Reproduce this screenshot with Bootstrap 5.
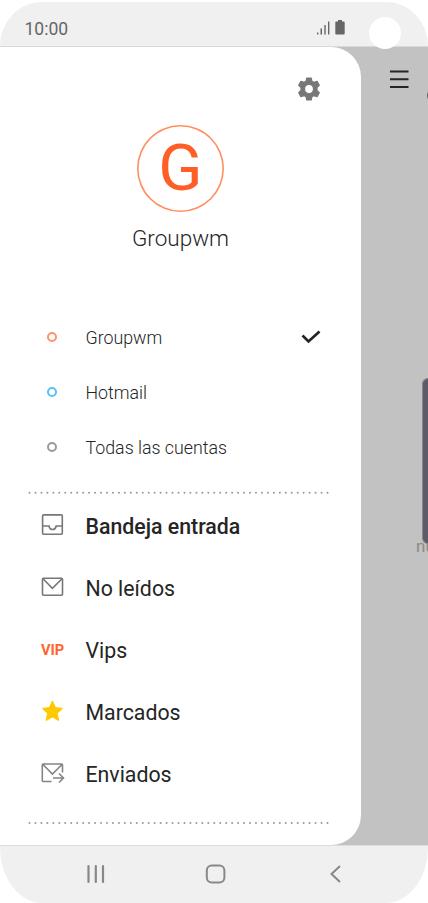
<!DOCTYPE html>
<html lang="es">
<head>
<meta charset="utf-8">
<meta name="viewport" content="width=device-width, initial-scale=1">
<title>Correo</title>
<link href="https://cdn.jsdelivr.net/npm/bootstrap@5.3.0/dist/css/bootstrap.min.css" rel="stylesheet">
<style>
body{background:#fff;font-family:Roboto,sans-serif;color:#252525}
svg{display:block;flex:none}
.phone{width:428px;height:903px;padding-top:2px}
.status{height:45px;background:#f0f0f0;border-bottom:1px solid #d9d9d9;border-radius:42px 42px 0 0/44px 44px 0 0;padding:14px 82.500px 0 24.500px;color:#666;font-size:17.5px}
.signals{margin-top:3px}
.camera{left:368.500px;top:16.500px;width:32px;height:32px;background:#fff;z-index:3}
.stage{height:798px;background:#c2c2c2}
.drawer{width:361px;background:#fff;border-radius:0 30px 30px 0}
.behind{width:67px}
.gear{padding:30px 40.500px 0 0;height:78px}
.avatar{width:87px;height:87px;box-shadow:inset 0 0 0 1.600px #ff8f62;color:#ff5f27;font-size:65px;line-height:1}
.owner{font-size:22.5px;font-weight:300;line-height:28px;margin-top:12px}
.accounts{margin-top:57px}
.account{height:55px;padding:0 40px 0 41px;font-size:17.8px;font-weight:300}
.account-name{padding-top:3px}
.folder{height:62.2px;padding-left:41px;font-size:21.3px}
.folder-name{padding-top:3px}
.current{font-weight:500}
.icon-slot{width:22px;margin-right:22.500px;flex:none}
.ring{width:10px;height:10px;border:2px solid #9a9a9a}
.ring-orange{border-color:#ff9266}
.ring-blue{border-color:#5cc0f2}
.vip{color:#ff6430;font-size:14.6px;font-weight:700;line-height:1;padding-top:2px}
.keys{height:58px;background:#f0f0f0;border-top:1px solid #dedede;border-radius:0 0 42px 42px/0 0 56px 56px;padding:0 86px 1px}
.home-key{margin-left:-5px}
.panel{width:6px;height:166px;margin-top:267px;background:#5c5b69;border:solid #858585;border-width:1px 0 1px 1px;border-radius:7px 0 0 7px}
.peek{font-size:17px;line-height:20px;color:#8a8a8a;width:12px;margin-top:-8px}
</style>
<script src="https://cdn.jsdelivr.net/npm/bootstrap@5.3.0/dist/js/bootstrap.bundle.min.js"></script>
</head>
<body>
<div class="phone position-relative overflow-hidden d-flex flex-column">
  <header class="status d-flex justify-content-between">
    <span>10:00</span>
    <svg class="signals" width="30" height="17" viewBox="0 0 30 17" fill="#666"><path d="M1 13.500h1.400v2H1zM4.500 9.500H6v6H4.500zM8.300 6h1.400v9.500H8.300zM12 2.500h1.400v13H12zM22 1h4v1.400h1.700q1 0 1 1V14.500q0 1-1 1h-7.400q-1 0-1-1V3.400q0-1 1-1h1.700z"/></svg>
  </header>
  <div class="camera position-absolute rounded-circle"></div>
  <main class="stage d-flex">
    <aside class="drawer d-flex flex-column">
      <div class="gear d-flex justify-content-end">
        <svg width="24" height="24" viewBox="0 0 24 24" fill="#777"><path fill-rule="evenodd" stroke="#777" stroke-width="1.200" stroke-linejoin="round" d="M9.800 1h4.400l.7 3.200 2 1.150 3.200-1L22.300 8.300l-2.300 2.300v2.700l2.300 2.300-2.200 4-3.200-1-2 1.150-.7 3.250H9.800l-.7-3.250-2-1.150-3.200 1-2.200-4L4 13.300v-2.700L1.700 8.300l2.200-3.950 3.200 1 2-1.150zM12 7.500a4.500 4.500 0 1 0 0 9 4.500 4.500 0 1 0 0-9z"/></svg>
      </div>
      <div class="d-flex flex-column align-items-center">
        <div class="avatar rounded-circle d-flex align-items-center justify-content-center">G</div>
        <div class="owner">Groupwm</div>
      </div>
      <div class="accounts">
        <div class="account d-flex align-items-center">
          <div class="icon-slot d-flex justify-content-center"><span class="ring ring-orange rounded-circle"></span></div>
          <span class="account-name">Groupwm</span>
          <svg class="ms-auto" width="20" height="14" viewBox="0 0 20 14"><path d="M1.500 5.500l6 6L18.500 1.500" fill="none" stroke="#252525" stroke-width="2.700"/></svg>
        </div>
        <div class="account d-flex align-items-center">
          <div class="icon-slot d-flex justify-content-center"><span class="ring ring-blue rounded-circle"></span></div>
          <span class="account-name">Hotmail</span>
        </div>
        <div class="account d-flex align-items-center">
          <div class="icon-slot d-flex justify-content-center"><span class="ring rounded-circle"></span></div>
          <span class="account-name">Todas las cuentas</span>
        </div>
      </div>
      <svg width="361" height="20" viewBox="0 0 361 20"><path d="M29.500 18.700h299" stroke="#999" stroke-width="2" stroke-linecap="round" stroke-dasharray="0 5.960"/></svg>
      <nav>
        <div class="folder current d-flex align-items-center">
          <div class="icon-slot"><svg width="23" height="22" viewBox="0 0 23 22" fill="none" stroke="#777" stroke-width="1.600"><rect x="1.600" y=".9" width="19.700" height="19.300" rx="1"/><path d="M2 12h6q.6 3.500 3.600 3.500t3.600-3.500h6.300"/></svg></div>
          <span class="folder-name">Bandeja entrada</span>
        </div>
        <div class="folder d-flex align-items-center">
          <div class="icon-slot"><svg width="23" height="20" viewBox="0 0 23 20" fill="none" stroke="#777" stroke-width="1.600"><rect x="1.500" y="1.300" width="20" height="17" rx="1"/><path d="M2 1.800l9.400 9.500L21 1.800"/></svg></div>
          <span class="folder-name">No leídos</span>
        </div>
        <div class="folder d-flex align-items-center">
          <div class="icon-slot vip">VIP</div>
          <span class="folder-name">Vips</span>
        </div>
        <div class="folder d-flex align-items-center">
          <div class="icon-slot"><svg width="23" height="23" viewBox="0 0 23 23" fill="#ffc900" stroke="#ffc900" stroke-linejoin="round"><path d="M11.400 1l3 6.600 7.100.8-5.300 4.900 1.500 7.200-6.300-3.500-6.300 3.500 1.500-7.200-5.300-4.900 7.100-.8z"/></svg></div>
          <span class="folder-name">Marcados</span>
        </div>
        <div class="folder d-flex align-items-center">
          <div class="icon-slot"><svg width="25" height="22" viewBox="0 0 25 22" fill="none" stroke="#858585" stroke-width="1.600"><path d="M10.500 18.500H2.200q-.9 0-.9-.9V1.900q0-.9.900-.9h18.400q.9 0 .9.900V9.500M2 1.500l9.400 9.500L21 1.500M12 15h10.500M18 10.500l4.500 4.500L18 19.500"/></svg></div>
          <span class="folder-name">Enviados</span>
        </div>
      </nav>
      <svg width="361" height="30" viewBox="0 0 361 30"><path d="M29.500 18h299" stroke="#999" stroke-width="2" stroke-linecap="round" stroke-dasharray="0 5.960"/></svg>
    </aside>
    <div class="behind d-flex flex-column align-items-end overflow-hidden">
      <svg width="67" height="64" viewBox="0 0 67 64"><path d="M29 24.500h18.500M29 32.200h18.500M29 40h18.500" stroke="#252525" stroke-width="2"/><circle cx="73.500" cy="48.500" r="6.500" fill="none" stroke="#555" stroke-width="1.800"/></svg>
      <div class="panel"></div>
      <div class="peek">nu</div>
    </div>
  </main>
  <footer class="keys d-flex align-items-center justify-content-between">
    <svg width="20" height="20" viewBox="0 0 20 20"><path d="M2.500 2v16M9.800 2v16M17 2v16" stroke="#888" stroke-width="2.200" stroke-linecap="round"/></svg>
    <svg class="home-key" width="21" height="20" viewBox="0 0 21 20"><rect x="1.800" y="1.500" width="17.600" height="17" rx="5" fill="none" stroke="#888" stroke-width="2"/></svg>
    <svg width="12" height="20" viewBox="0 0 12 20"><path d="M10 2L1.500 10l8.500 8" fill="none" stroke="#888" stroke-width="2"/></svg>
  </footer>
</div>
</body>
</html>
